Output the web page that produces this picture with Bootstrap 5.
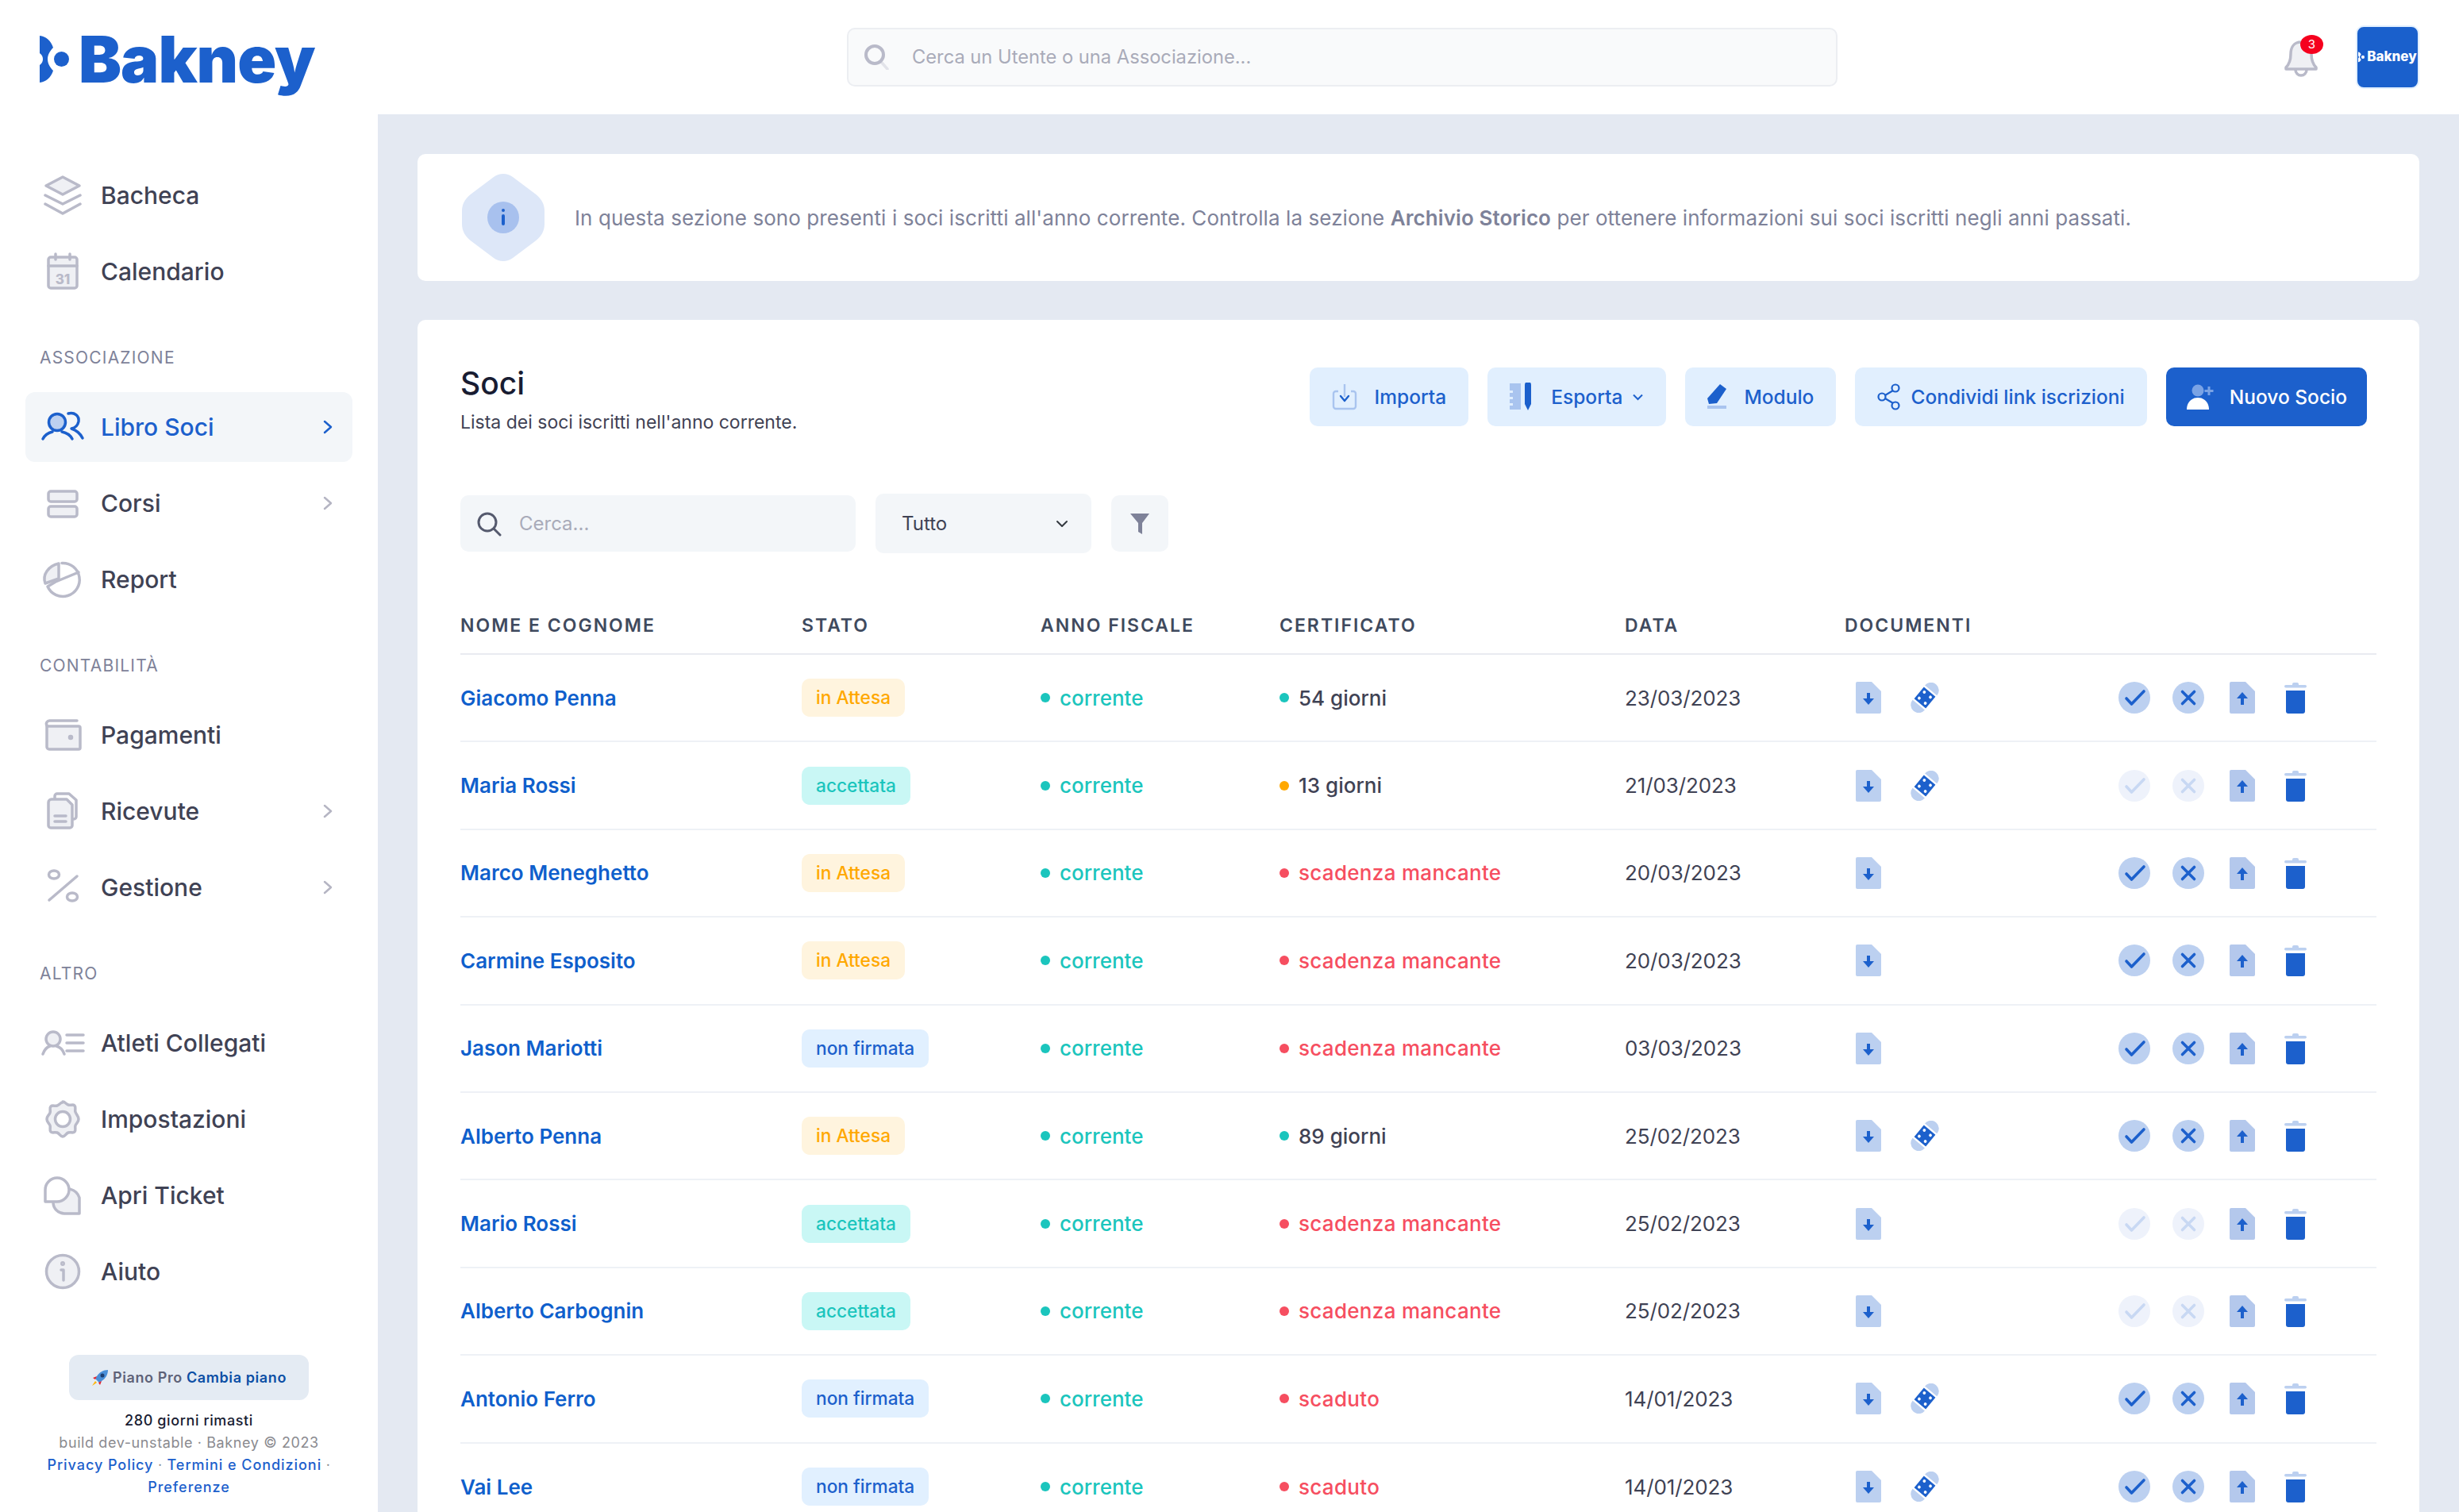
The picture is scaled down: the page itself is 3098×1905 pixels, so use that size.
<!DOCTYPE html>
<html lang="it">

<head>
    <meta charset="UTF-8">
    <meta name="viewport" content="width=device-width, initial-scale=1.0">
    <title>Bakney - Libro Soci</title>
    <link href="https://cdn.jsdelivr.net/npm/bootstrap@5.3.2/dist/css/bootstrap.min.css" rel="stylesheet">
    <style>
        html, body { height: 100%; overflow: hidden; }
        body { background: #e4e9f2; font-family: Inter, "Liberation Sans", sans-serif; color: #3f4254; }
        a { text-decoration: none; }
        .app-shell { height: 1905px; }

        /* sidebar */
        .side-bar { width: 476px; flex: none; background: #fff; }
        .brand-row { height: 202px; padding: 45px 0 0 50px; gap: 12px; color: #1c60cc; }
        .brand-name { font-size: 81px; font-weight: 900; line-height: 81px; letter-spacing: -1px; margin-top: -10px; }
        .side-nav { padding: 0 32px; }
        .side-link { height: 88px; margin-bottom: 8px; padding: 0 24px 0 16px; border-radius: 12px; color: #3f4254; font-size: 30px; font-weight: 500; gap: 17px; }
        .side-link.is-on { background: #f3f6f9; color: #1c60cc; }
        .side-link:hover { color: #1c60cc; }
        .side-ico { width: 62px; height: 56px; flex: none; fill: #eff0f4; stroke: #b9bac9; stroke-width: 3.5; stroke-linejoin: round; stroke-linecap: round; }
        .is-on .side-ico { fill: #bcd0f0; stroke: #1c60cc; }
        .side-chev { width: 14px; height: 20px; fill: none; stroke: #b5b5c3; stroke-width: 2.5; stroke-linecap: round; stroke-linejoin: round; }
        .is-on .side-chev { stroke: #1c60cc; }
        .side-label { margin: 50px 0 28px 18px; height: 30px; line-height: 30px; font-size: 21px; letter-spacing: 1.2px; color: #7e8299; text-transform: uppercase; }
        .side-foot { margin-top: 53px; text-align: center; font-size: 18px; line-height: 28px; letter-spacing: .6px; padding: 0 50px; color: #8a8a8f; }
        .plan-pill { margin: 0 37px 12px; height: 57px; background: #e4ebf3; border-radius: 12px; font-weight: 600; color: #5e6278; gap: 5px; white-space: nowrap; }
        .plan-pill a { color: #0c4fa5; }
        .foot-days { color: #181c32; font-weight: 500; }
        .side-foot .foot-link { color: #1c60cc; font-weight: 500; letter-spacing: .95px; }

        /* topbar */
        .top-bar { height: 144px; flex: none; background: #fff; padding: 0 50px 0 591px; }
        .top-search { width: 1248px; height: 74px; background: #f9fafb; border: 2px solid #eceef2; border-radius: 10px; padding: 0 20px; gap: 28px; }
        .top-search input, .list-search input { border: 0; background: transparent; padding: 0; font-size: 24px; color: #3f4254; box-shadow: none; }
        .top-search input { font-size: 23.7px; }
        .top-search input::placeholder, .list-search input::placeholder { color: #a9abb9; }
        .top-search input:focus, .list-search input:focus { background: transparent; box-shadow: none; }
        .bell-box { width: 50px; height: 60px; margin-right: 41px; }
        .bell-box svg { margin-top: 6px; }
        .bell-count { top: 2px; right: 0; left: auto; transform: none; width: 29px; height: 24px; padding: 0; line-height: 24px; background: #f5001e; color: #fff; font-size: 15px; font-weight: 400; border-radius: 50%; }
        .org-thumb { width: 80px; height: 80px; background: #1a60cc; border: 2px solid #e1effe; border-radius: 10px; color: #fff; font-size: 17px; font-weight: 800; gap: 3px; }

        /* content */
        .page-body { padding: 50px 50px 0; min-height: 0; }
        .note-card { height: 160px; margin-bottom: 49px; border: 0; border-radius: 10px; padding: 0 56px; gap: 38px; font-size: 26px; letter-spacing: .08px; color: #7e8299; flex-direction: row; }
        .note-card b { font-weight: 600; color: #7e8299; }
        .main-card { border: 0; border-radius: 10px; padding: 60px 54px 0; }
        .soci-heading { margin-top: -2px; }
        .soci-title { font-size: 39px; font-weight: 500; line-height: 44px; color: #181c32; margin: 0 0 13px; }
        .soci-sub { font-size: 23px; line-height: 28px; color: #3f4254; }
        .head-btns { gap: 24px; padding-right: 12px; }
        .act-btn { height: 74px; padding: 0 28px; gap: 22px; background: #e1effe; border: 0; border-radius: 10px; color: #1c60cc; font-size: 24.5px; font-weight: 500; white-space: nowrap; }
        .act-btn:hover { background: #d0e4fb; color: #1c60cc; }
        .act-btn.is-main, .act-btn.is-main:hover { background: #1c60cc; color: #fff; padding: 0 25px; gap: 20px; }
        .act-btn.is-share { gap: 13px; }
        .caret-ico { margin-left: -10px; }
        .filter-row { margin-top: 76px; height: 75px; gap: 25px; }
        .list-search { width: 498px; height: 71px; background: #f3f6f9; border-radius: 10px; padding: 0 20px; gap: 22px; }
        .lens-dark { color: #555a6e; }
        .list-select { width: 272px; height: 75px; padding-left: 33px; background-color: #f3f6f9; background-position: right 26px center; background-size: 22px 16px; border: 0; border-radius: 10px; font-size: 24px; color: #3f4254; }
        .filter-btn { width: 72px; height: 71px; background: #f3f6f9; border: 0; border-radius: 10px; padding: 0; }
        .soci-table { margin: 78px 0 0; width: 2414px; table-layout: fixed; --bs-table-bg: transparent; }
        .soci-table th { padding: 0 0 21px; font-size: 23px; line-height: 27px; font-weight: 600; letter-spacing: 2px; color: #3f4a5e; text-transform: uppercase; border-bottom: 2px solid #e9ebf1; }
        .soci-table td { padding: 0; height: 110.4px; vertical-align: middle; font-size: 26px; border-bottom: 2px solid #eef1f6; color: #3f4254; }
        .soci-table tbody tr:last-child td { border-bottom: 0; }
        .nome-link { color: #0f5fcc; font-weight: 600; }
        .stato-tag { height: 48px; padding: 0 18px; line-height: 48px; font-size: 22.7px; font-weight: 500; border-radius: 10px; }
        .tag-wait { background: #fff4de; color: #ffa800; }
        .tag-ok { background: #c9f7f5; color: #1bc5bd; }
        .tag-unsigned { background: #e1f0ff; color: #1c60cc; }
        .dot-txt { gap: 12px; font-weight: 500; }
        .dot-txt::before { content: ""; width: 12px; height: 12px; border-radius: 50%; background: currentColor; }
        .dot-green { color: #1bc5bd; }
        .dot-dark::before { background: #1bc5bd; }
        .dot-warn::before { background: #ffa800; }
        .dot-red { color: #f64e60; letter-spacing: .3px; }
        .data-cell { letter-spacing: -.1px; }
        .doc-ico { width: 32px; height: 40px; display: block; }
        .plaster-ico { width: 36px; height: 38px; display: block; margin-left: 37px; }
        .round-ico { width: 40px; height: 40px; display: block; }
        .trash-ico { width: 28px; height: 40px; display: block; }
        .doc-cell { padding-left: 14px !important; }
        .tools { gap: 28px; }
        .tools .doc-ico { margin-left: 4px; margin-right: 9px; }
    </style>
</head>

<body>
    <svg width="0" height="0" class="d-none" aria-hidden="true">
        <symbol id="i-file-down" viewBox="0 0 32 40">
            <path d="M2 0H20L32 12V38a2 2 0 0 1-2 2H2a2 2 0 0 1-2-2V2a2 2 0 0 1 2-2z" fill="#bcd0f0" />
            <path d="M14 14h4v7h5l-7 8-7-8h5z" fill="#1c60cc" />
        </symbol>
        <symbol id="i-file-up" viewBox="0 0 32 40">
            <path d="M2 0H20L32 12V38a2 2 0 0 1-2 2H2a2 2 0 0 1-2-2V2a2 2 0 0 1 2-2z" fill="#b4c8ec" />
            <path d="M14 29h4v-8h5l-7-8-7 8h5z" fill="#1c60cc" />
        </symbol>
        <symbol id="i-plaster" viewBox="0 0 36 38">
            <g transform="rotate(-50 18 19)">
                <rect x="-4" y="9" width="44" height="20" rx="10" fill="#bcd0f0" />
                <rect x="6" y="6" width="24" height="26" fill="#fff" />
                <rect x="8.5" y="9.5" width="19" height="19" fill="#1c60cc" />
                <circle cx="13" cy="14" r="1.9" fill="#fff" />
                <circle cx="23" cy="14" r="1.9" fill="#fff" />
                <circle cx="13" cy="24" r="1.9" fill="#fff" />
                <circle cx="23" cy="24" r="1.9" fill="#fff" />
            </g>
        </symbol>
        <symbol id="i-ok" viewBox="0 0 40 40">
            <circle cx="20" cy="20" r="20" fill="#bcd0f0" />
            <path d="M10 21l6.5 7L32 12" fill="none" stroke="#1c60cc" stroke-width="3.6" stroke-linecap="round" stroke-linejoin="round" />
        </symbol>
        <symbol id="i-no" viewBox="0 0 40 40">
            <circle cx="20" cy="20" r="20" fill="#bcd0f0" />
            <path d="M12.5 12.5l15 15m0-15l-15 15" fill="none" stroke="#1c60cc" stroke-width="3.6" stroke-linecap="round" />
        </symbol>
        <symbol id="i-ok-off" viewBox="0 0 40 40">
            <circle cx="20" cy="20" r="20" fill="#eef2fb" />
            <path d="M10 21l6.5 7L32 12" fill="none" stroke="#c8d8f3" stroke-width="3.6" stroke-linecap="round" stroke-linejoin="round" />
        </symbol>
        <symbol id="i-no-off" viewBox="0 0 40 40">
            <circle cx="20" cy="20" r="20" fill="#eef2fb" />
            <path d="M12.5 12.5l15 15m0-15l-15 15" fill="none" stroke="#c8d8f3" stroke-width="3.6" stroke-linecap="round" />
        </symbol>
        <symbol id="i-trash" viewBox="0 0 28 40">
            <rect x="0" y="4" width="28" height="3.5" rx="1.7" fill="#bcd0f0" />
            <rect x="10" y="1" width="8" height="5" rx="2" fill="#bcd0f0" />
            <path d="M2 11H26V37a3 3 0 0 1-3 3H5a3 3 0 0 1-3-3z" fill="#1c60cc" />
        </symbol>
        <symbol id="i-chev" viewBox="0 0 14 20">
            <path d="M3 3l8 7-8 7" />
        </symbol>
        <symbol id="i-lens" viewBox="0 0 32 32">
            <circle cx="14" cy="14" r="11" fill="none" stroke="currentColor" stroke-width="3" />
            <path d="M22 22l8 8" stroke="currentColor" stroke-width="3" stroke-linecap="round" />
        </symbol>
        <symbol id="i-mark" viewBox="0 0 37 60">
            <path d="M0 0C8 1 14 6 17 15 13 19 10 24 10 29.500 10 35 13 40 17 44 14 53 8 58 0 59V37C3 35 4 32 4 29.500 4 27 3 24 0 22z" />
            <circle cx="27.500" cy="29.500" r="9.500" />
        </symbol>
    </svg>

    <div class="app-shell d-flex">
        <!-- Sidebar -->
        <aside class="side-bar d-flex flex-column">
            <a class="brand-row d-flex align-items-start" href="#">
                <svg width="37" height="60" fill="#1c60cc"><use href="#i-mark" /></svg>
                <span class="brand-name">Bakney</span>
            </a>
            <nav class="side-nav">
                <a class="side-link d-flex align-items-center" href="#">
                    <svg class="side-ico" viewBox="0 0 62 56"><path d="M31 5l21 11-21 11-21-11z" /><path fill="none" d="M9 28l22 11 22-11M9 39l22 12 22-12" /></svg>
                    Bacheca
                </a>
                <a class="side-link d-flex align-items-center" href="#">
                    <svg class="side-ico" viewBox="0 0 62 56"><rect x="13" y="10" width="36" height="39" rx="3" /><path d="M13 21h36M22 6v7M40 6v7" /><text x="31" y="44" font-size="17" font-weight="800" text-anchor="middle" stroke="none" fill="#b9bac9">31</text></svg>
                    Calendario
                </a>
                <div class="side-label">Associazione</div>
                <a class="side-link is-on d-flex align-items-center" href="#">
                    <svg class="side-ico" viewBox="0 0 62 56"><circle cx="24" cy="22" r="10.5" /><path fill="none" d="M6 43c3-6 8-8 12-9M30 34c5 1 10 3 13 9" /><path fill="none" d="M38 11c8-2 14 3 13 10-1 5-4 8-9 9 6 2 11 6 14 12" /></svg>
                    <span class="flex-grow-1">Libro Soci</span>
                    <svg class="side-chev"><use href="#i-chev" /></svg>
                </a>
                <a class="side-link d-flex align-items-center" href="#">
                    <svg class="side-ico" viewBox="0 0 62 56"><rect x="13" y="13" width="36" height="13" rx="3" /><rect x="13" y="32" width="36" height="13" rx="3" /></svg>
                    <span class="flex-grow-1">Corsi</span>
                    <svg class="side-chev"><use href="#i-chev" /></svg>
                </a>
                <a class="side-link d-flex align-items-center" href="#">
                    <svg class="side-ico" viewBox="0 0 62 56"><path fill="none" d="M30 7.500A21 21 0 1 1 12 37L22 31 51 19" /><path d="M26 8V27L9 33C5 22 13 11 26 8z" /></svg>
                    Report
                </a>
                <div class="side-label">Contabilità</div>
                <a class="side-link d-flex align-items-center" href="#">
                    <svg class="side-ico" viewBox="0 0 62 56"><path d="M11 16v27a3 3 0 0 0 3 3h37a2 2 0 0 0 2-2V19a2 2 0 0 0-2-2H11" /><path fill="none" d="M11 16a4 4 0 0 1 4-6h34" /><circle cx="41" cy="31" r="1.500" /></svg>
                    Pagamenti
                </a>
                <a class="side-link d-flex align-items-center" href="#">
                    <svg class="side-ico" viewBox="0 0 62 56"><path fill="none" d="M21 12V9a3 3 0 0 1 3-3h15l9 8v21a3 3 0 0 1-3 3" /><path d="M17 13h19l7 7v26a3 3 0 0 1-3 3H16a3 3 0 0 1-3-3V17a4 4 0 0 1 4-4z" /><path fill="none" d="M21 34h14M21 41h14" /></svg>
                    <span class="flex-grow-1">Ricevute</span>
                    <svg class="side-chev"><use href="#i-chev" /></svg>
                </a>
                <a class="side-link d-flex align-items-center" href="#">
                    <svg class="side-ico" viewBox="0 0 62 56"><ellipse cx="20" cy="12" rx="6.500" ry="5" fill="none" /><ellipse cx="43" cy="40" rx="6.500" ry="5" fill="none" /><path d="M14 44L49 14" fill="none" /></svg>
                    <span class="flex-grow-1">Gestione</span>
                    <svg class="side-chev"><use href="#i-chev" /></svg>
                </a>
                <div class="side-label">Altro</div>
                <a class="side-link d-flex align-items-center" href="#">
                    <svg class="side-ico" viewBox="0 0 62 56"><circle cx="19" cy="23" r="9" /><path fill="none" d="M6 42c2-6 6-9 9-10M23 32c4 1 8 4 10 10M36 18h21M36 28h21M36 38h21" /></svg>
                    Atleti Collegati
                </a>
                <a class="side-link d-flex align-items-center" href="#">
                    <svg class="side-ico" viewBox="0 0 62 56"><path d="M31 6c3 0 4 3 7 4s6-1 8 1 0 5 1 8 4 5 4 9-3 5-4 8 1 6-1 8-5 0-8 1-4 5-7 5-4-4-7-5-6 1-8-1 0-5-1-8-4-4-4-8 3-5 4-8-1-6 1-8 5 0 8-1 4-4 7-4z" /><circle cx="31" cy="28" r="9.500" fill="#fff" /></svg>
                    Impostazioni
                </a>
                <a class="side-link d-flex align-items-center" href="#">
                    <svg class="side-ico" viewBox="0 0 62 56"><path d="M26 24a16 16 0 0 1 26 7v20H33c-7 0-14-6-14-14 0-5 3-10 7-13z" /><path d="M9 21A15 15 0 0 1 39 21c0 8-7 15-15 15H9z" fill="#fff" /></svg>
                    Apri Ticket
                </a>
                <a class="side-link d-flex align-items-center" href="#">
                    <svg class="side-ico" viewBox="0 0 62 56"><circle cx="31" cy="28" r="20.500" /><path d="M29 26h3v13" fill="none" /><circle cx="31" cy="18" r="1.200" /></svg>
                    Aiuto
                </a>
            </nav>
            <div class="side-foot">
                <div class="plan-pill d-flex align-items-center justify-content-center">
                    <svg width="22" height="22" viewBox="0 0 22 22"><path d="M21 1c-6 0-11 3-14 8l-2 3 5 5 3-2c5-3 8-8 8-14z" fill="#4a90d9" /><circle cx="14" cy="8" r="2.500" fill="#1d3f72" /><path d="M7 9L2 11l3 2zM13 15l-2 5-2-3z" fill="#e3212e" /><path d="M5 15l-4 6 6-4z" fill="#ffb300" /></svg>
                    Piano Pro <a href="#">Cambia piano</a>
                </div>
                <div class="foot-days">280 giorni rimasti</div>
                <div>build dev-unstable · Bakney © 2023</div>
                <div><a class="foot-link" href="#">Privacy Policy</a> · <a class="foot-link" href="#">Termini e Condizioni</a> · <a class="foot-link" href="#">Preferenze</a></div>
            </div>
        </aside>

        <div class="flex-grow-1 d-flex flex-column">
            <!-- Topbar -->
            <header class="top-bar d-flex align-items-center">
                <div class="top-search d-flex align-items-center">
                    <svg width="32" height="32" viewBox="0 0 32 32" class="flex-shrink-0" fill="none"><path d="M22 23l7 8" stroke="#e2e3e9" stroke-width="3.500" stroke-linecap="round" /><circle cx="13" cy="13" r="11" stroke="#b9bac9" stroke-width="4" /></svg>
                    <input type="text" class="form-control" placeholder="Cerca un Utente o una Associazione...">
                </div>
                <div class="ms-auto bell-box position-relative">
                    <svg width="44" height="50" viewBox="0 0 44 50" fill="#eff0f4" stroke="#b9bac9" stroke-width="3.500" stroke-linejoin="round"><path d="M22 5C12 5 9 13 9 20c0 7-2 13-6 17v2h38v-2c-4-4-6-10-6-17 0-7-3-15-13-15z" /><path d="M15 40a7 7 0 0 0 14 0" fill="none" /></svg>
                    <span class="badge bell-count position-absolute">3</span>
                </div>
                <div class="org-thumb d-flex align-items-center justify-content-center">
                    <svg width="8" height="14" fill="#fff"><use href="#i-mark" /></svg>
                    Bakney
                </div>
            </header>

            <main class="page-body flex-grow-1 overflow-hidden">
                <!-- Info -->
                <div class="card note-card d-flex align-items-center">
                    <svg width="104" height="112" viewBox="0 0 104 112" class="flex-shrink-0">
                        <path d="M40 5a20 20 0 0 1 24 0L92 26c8 6 12 13 12 22v16c0 9-4 16-12 22L64 107a20 20 0 0 1-24 0L12 86C4 80 0 73 0 64V48c0-9 4-16 12-22z" fill="#dde7f8" />
                        <circle cx="52" cy="56" r="20" fill="#a8c1ee" />
                        <circle cx="52" cy="47" r="2" fill="#1c60cc" />
                        <rect x="50" y="52" width="4" height="14" rx="2" fill="#1c60cc" />
                    </svg>
                    <div>In questa sezione sono presenti i soci iscritti all'anno corrente. Controlla la sezione <b>Archivio Storico</b> per ottenere informazioni sui soci iscritti negli anni passati.</div>
                </div>

                <!-- Soci -->
                <div class="card main-card">
                    <div class="d-flex justify-content-between align-items-start">
                        <div class="soci-heading">
                            <h1 class="soci-title">Soci</h1>
                            <div class="soci-sub">Lista dei soci iscritti nell'anno corrente.</div>
                        </div>
                        <div class="head-btns d-flex">
                            <button class="btn act-btn d-flex align-items-center">
                                <svg width="32" height="34" viewBox="0 0 32 34" fill="none" stroke="#a9c4ef" stroke-width="2.400"><path d="M8 10H5a3 3 0 0 0-3 3v16a3 3 0 0 0 3 3h22a3 3 0 0 0 3-3V13a3 3 0 0 0-3-3h-3M16 1v16" /><path d="M11 16l5 6 5-6" stroke="#1c60cc" stroke-linecap="round" stroke-linejoin="round" /></svg>
                                Importa
                            </button>
                            <button class="btn act-btn d-flex align-items-center">
                                <svg width="30" height="36" viewBox="0 0 30 36"><path d="M0 1h14v33H0v-5h4v-3H0v-5h4v-3H0v-5h4V10H0z" fill="#a9c4ef" /><path d="M19 3a4 4 0 0 1 8 0v24l-4 8-4-8z" fill="#1c60cc" /></svg>
                                <span>Esporta</span>
                                <svg width="15" height="9" viewBox="0 0 15 9" fill="none" stroke="#1c60cc" stroke-width="2" class="caret-ico"><path d="M2 1.500l5.500 5.500L13 1.500" /></svg>
                            </button>
                            <button class="btn act-btn d-flex align-items-center">
                                <svg width="24" height="32" viewBox="0 0 24 32"><path d="M16 0l8 6-12 18-10 1L0 18z" fill="#1c60cc" /><rect y="27" width="24" height="4" fill="#a9c4ef" /></svg>
                                Modulo
                            </button>
                            <button class="btn act-btn is-share d-flex align-items-center">
                                <svg width="29" height="34" viewBox="0 0 29 34" fill="none" stroke="#1c60cc" stroke-width="2.200"><circle cx="23" cy="6" r="4.500" /><circle cx="23" cy="28" r="4.500" /><circle cx="6" cy="17" r="4.500" /><path d="M10 15l10-6M10 19l10 6" /></svg>
                                Condividi link iscrizioni
                            </button>
                            <button class="btn act-btn is-main d-flex align-items-center">
                                <svg width="35" height="34" viewBox="0 0 35 34"><circle cx="15" cy="9" r="7.500" fill="#7aa3e5" /><path d="M1 33c0-9 6-15 14-15s14 6 14 15z" fill="#fff" /><path d="M29 4v11M23.500 9.500h11" stroke="#7aa3e5" stroke-width="3" /></svg>
                                Nuovo Socio
                            </button>
                        </div>
                    </div>

                    <div class="filter-row d-flex align-items-center">
                        <div class="list-search d-flex align-items-center">
                            <svg width="32" height="32" class="lens-dark flex-shrink-0"><use href="#i-lens" /></svg>
                            <input type="text" class="form-control" placeholder="Cerca...">
                        </div>
                        <select class="form-select list-select">
                            <option>Tutto</option>
                        </select>
                        <button class="btn filter-btn" aria-label="Filtri">
                            <svg width="24" height="26" viewBox="0 0 24 26"><path d="M0 0h24l-9 12v14l-5-3V12z" fill="#7e8299" /></svg>
                        </button>
                    </div>

                    <table class="table soci-table">
                        <colgroup>
                            <col style="width:430px"><col style="width:301px"><col style="width:301px"><col style="width:435px"><col style="width:277px"><col style="width:345px"><col style="width:325px">
                        </colgroup>
                        <thead>
                            <tr><th>Nome e Cognome</th><th>Stato</th><th>Anno Fiscale</th><th>Certificato</th><th>Data</th><th>Documenti</th><th></th></tr>
                        </thead>
                        <tbody id="righe"></tbody>
                    </table>
                </div>
            </main>
        </div>
    </div>

    <script src="https://cdn.jsdelivr.net/npm/bootstrap@5.3.2/dist/js/bootstrap.bundle.min.js"></script>
    <script>
        const soci = [
            ['Giacomo Penna', 'wait', 'dark', '54 giorni', '23/03/2023', true, true],
            ['Maria Rossi', 'ok', 'warn', '13 giorni', '21/03/2023', true, false],
            ['Marco Meneghetto', 'wait', 'red', 'scadenza mancante', '20/03/2023', false, true],
            ['Carmine Esposito', 'wait', 'red', 'scadenza mancante', '20/03/2023', false, true],
            ['Jason Mariotti', 'unsigned', 'red', 'scadenza mancante', '03/03/2023', false, true],
            ['Alberto Penna', 'wait', 'dark', '89 giorni', '25/02/2023', true, true],
            ['Mario Rossi', 'ok', 'red', 'scadenza mancante', '25/02/2023', false, false],
            ['Alberto Carbognin', 'ok', 'red', 'scadenza mancante', '25/02/2023', false, false],
            ['Antonio Ferro', 'unsigned', 'red', 'scaduto', '14/01/2023', true, true],
            ['Vai Lee', 'unsigned', 'red', 'scaduto', '14/01/2023', true, true]
        ];
        const etichette = { wait: 'in Attesa', ok: 'accettata', unsigned: 'non firmata' };

        document.getElementById('righe').innerHTML = soci.map(s => `
            <tr>
                <td><a class="nome-link" href="#">${s[0]}</a></td>
                <td><span class="badge stato-tag tag-${s[1]}">${etichette[s[1]]}</span></td>
                <td><span class="d-flex align-items-center dot-txt dot-green">corrente</span></td>
                <td><span class="d-flex align-items-center dot-txt dot-${s[2]}">${s[3]}</span></td>
                <td class="data-cell">${s[4]}</td>
                <td class="doc-cell"><div class="d-flex align-items-center">
                    <svg class="doc-ico"><use href="#i-file-down" /></svg>
                    ${s[5] ? '<svg class="plaster-ico"><use href="#i-plaster" /></svg>' : ''}
                </div></td>
                <td><div class="tools d-flex align-items-center">
                    <svg class="round-ico"><use href="#i-ok${s[6] ? '' : '-off'}" /></svg>
                    <svg class="round-ico"><use href="#i-no${s[6] ? '' : '-off'}" /></svg>
                    <svg class="doc-ico"><use href="#i-file-up" /></svg>
                    <svg class="trash-ico"><use href="#i-trash" /></svg>
                </div></td>
            </tr>`).join('');
    </script>
</body>

</html>
